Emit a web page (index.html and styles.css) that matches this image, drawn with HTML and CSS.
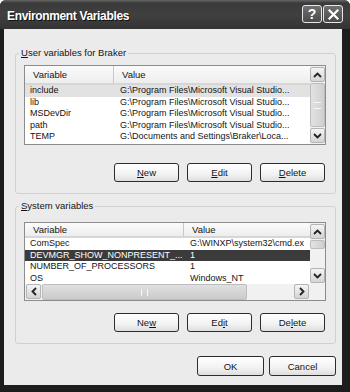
FILE: index.html
```html
<!DOCTYPE html>
<html lang="en">
<head>
    <meta charset="UTF-8">
    <title>Environment Variables</title>
    <link rel="stylesheet" href="styles.css">
</head>
<body>
    <div class="window">
        <div class="titlebar">
            <span class="title">Environment Variables</span>
            <div class="title-buttons">
                <span class="tbtn help">?</span>
                <span class="tbtn close">
                    <svg width="11" height="11" viewBox="0 0 11 11"><path d="M1.5 1.5 L9.5 9.5 M9.5 1.5 L1.5 9.5" stroke="#fff" stroke-width="2.2" stroke-linecap="square"/></svg>
                </span>
            </div>
        </div>

        <div class="content">
            <div class="group user-group">
                <div class="group-title"><u>U</u>ser variables for Braker</div>
                <div class="list user-list">
                    <div class="list-main">
                        <div class="list-head user-head">
                            <div class="cell var-col-user">Variable</div>
                            <div class="cell">Value</div>
                        </div>
                        <div class="row soft">
                            <div class="cell var-col-user">include</div>
                            <div class="cell">G:\Program Files\Microsoft Visual Studio...</div>
                        </div>
                        <div class="row">
                            <div class="cell var-col-user">lib</div>
                            <div class="cell">G:\Program Files\Microsoft Visual Studio...</div>
                        </div>
                        <div class="row">
                            <div class="cell var-col-user">MSDevDir</div>
                            <div class="cell">G:\Program Files\Microsoft Visual Studio...</div>
                        </div>
                        <div class="row">
                            <div class="cell var-col-user">path</div>
                            <div class="cell">G:\Program Files\Microsoft Visual Studio...</div>
                        </div>
                        <div class="row">
                            <div class="cell var-col-user">TEMP</div>
                            <div class="cell">G:\Documents and Settings\Braker\Loca...</div>
                        </div>
                    </div>
                    <div class="vscroll">
                        <span class="sbtn"><svg width="9" height="6" viewBox="0 0 9 6"><path d="M1 5 L4.5 1.5 L8 5" fill="none" stroke="#222" stroke-width="1.8"/></svg></span>
                        <span class="thumb full"><span class="grip-h"></span></span>
                        <span class="sbtn"><svg width="9" height="6" viewBox="0 0 9 6"><path d="M1 1 L4.5 4.5 L8 1" fill="none" stroke="#222" stroke-width="1.8"/></svg></span>
                    </div>
                </div>
                <div class="buttons">
                    <button class="btn"><u>N</u>ew</button>
                    <button class="btn"><u>E</u>dit</button>
                    <button class="btn"><u>D</u>elete</button>
                </div>
            </div>

            <div class="group sys-group">
                <div class="group-title"><u>S</u>ystem variables</div>
                <div class="list sys-list">
                    <div class="list-main">
                        <div class="list-head sys-head">
                            <div class="cell var-col-sys">Variable</div>
                            <div class="cell">Value</div>
                        </div>
                        <div class="row">
                            <div class="cell var-col-sys">ComSpec</div>
                            <div class="cell">G:\WINXP\system32\cmd.ex</div>
                        </div>
                        <div class="row dark">
                            <div class="cell var-col-sys">DEVMGR_SHOW_NONPRESENT_...</div>
                            <div class="cell">1</div>
                        </div>
                        <div class="row">
                            <div class="cell var-col-sys">NUMBER_OF_PROCESSORS</div>
                            <div class="cell">1</div>
                        </div>
                        <div class="row">
                            <div class="cell var-col-sys">OS</div>
                            <div class="cell">Windows_NT</div>
                        </div>
                    </div>
                    <div class="vscroll">
                        <span class="sbtn"><svg width="9" height="6" viewBox="0 0 9 6"><path d="M1 5 L4.5 1.5 L8 5" fill="none" stroke="#222" stroke-width="1.8"/></svg></span>
                        <span class="thumb small"></span>
                        <span class="track"></span>
                        <span class="sbtn"><svg width="9" height="6" viewBox="0 0 9 6"><path d="M1 1 L4.5 4.5 L8 1" fill="none" stroke="#222" stroke-width="1.8"/></svg></span>
                    </div>
                    <div class="hscroll">
                        <span class="sbtn"><svg width="6" height="9" viewBox="0 0 6 9"><path d="M5 1 L1.5 4.5 L5 8" fill="none" stroke="#222" stroke-width="1.8"/></svg></span>
                        <span class="thumb wide"><span class="grip-v"></span></span>
                        <span class="track"></span>
                        <span class="sbtn"><svg width="6" height="9" viewBox="0 0 6 9"><path d="M1 1 L4.5 4.5 L1 8" fill="none" stroke="#222" stroke-width="1.8"/></svg></span>
                    </div>
                    <div class="corner"></div>
                </div>
                <div class="buttons">
                    <button class="btn">Ne<u>w</u></button>
                    <button class="btn">Ed<u>i</u>t</button>
                    <button class="btn">De<u>l</u>ete</button>
                </div>
            </div>

            <div class="dialog-buttons">
                <button class="btn big">OK</button>
                <button class="btn big">Cancel</button>
            </div>
        </div>
    </div>
</body>
</html>
```

FILE: styles.css
```css
:root {
    --frame: #1d1d1d;
    --face: #ebebeb;
    --group-line: #d0d0d0;
    --list-line: #8c8c8c;
    --text: #141414;
}

body {
    margin: 0;
    background: #fff;
    font-family: "Liberation Sans", Arial, sans-serif;
    font-size: 9.5px;
    color: var(--text);
}

.window {
    width: 350px;
    height: 392px;
    background: var(--frame);
    border-radius: 6px 6px 0 0;
    display: flex;
    flex-direction: column;
    box-sizing: border-box;
}

/* title bar */
.titlebar {
    height: 29px;
    flex: none;
    display: flex;
    align-items: center;
    justify-content: space-between;
    padding: 2px 7px 0 7px;
    box-sizing: border-box;
    background: linear-gradient(#666 0, #3a3a3a 3px, #404040 50%, #343434 100%);
    border-radius: 6px 6px 0 0;
}

.title {
    color: #fff;
    font-weight: bold;
    font-size: 12px;
    letter-spacing: -0.35px;
    text-shadow: 1px 1px 0 #111;
}

.title-buttons {
    display: flex;
    gap: 1px;
    margin-top: -3px;
}

.tbtn {
    width: 18px;
    height: 16px;
    border: 1px solid #e8e8e8;
    border-radius: 3px;
    background: linear-gradient(#707070, #4a4a4a);
    color: #fff;
    display: flex;
    align-items: center;
    justify-content: center;
    font-weight: bold;
    font-size: 14px;
}

/* dialog body */
.content {
    flex: 1;
    margin: 0 8px 7px 4px;
    background: var(--face);
    padding: 24px 6px 0 11px;
    display: flex;
    flex-direction: column;
}

.group {
    border: 1px solid var(--group-line);
    border-radius: 3px;
    padding: 0 9px 11px 8px;
}

.sys-group {
    margin-top: 12px;
}

.group-title {
    width: fit-content;
    margin: -7px 0 0 -5px;
    padding: 0 2px;
    line-height: 12px;
    background: var(--face);
}

/* list views */
.list {
    display: grid;
    grid-template-columns: 1fr 15px;
    border: 1px solid var(--list-line);
    background: #fff;
    font-size: 9px;
}

.user-list {
    margin-top: 6px;
    height: 78px;
}

.sys-list {
    margin-top: 10px;
    grid-template-rows: 61px 16px;
    height: 77px;
}

.list-main {
    overflow: hidden;
    min-width: 0;
}

.list-head {
    display: flex;
    align-items: center;
    background: linear-gradient(#fbfbfb, #ededed);
    border-bottom: 2px solid #d6d6d6;
    box-sizing: border-box;
    font-size: 9.5px;
}

.user-head {
    height: 19px;
}

.sys-head {
    height: 15px;
}

.list-head .cell {
    padding-left: 8px;
}

.list-head .cell:first-child {
    border-right: 1px solid #c8c8c8;
    height: 100%;
    display: flex;
    align-items: center;
    box-sizing: border-box;
}

.row {
    display: flex;
    height: 11.5px;
    line-height: 11.5px;
}

.row.soft {
    background: #e2e2e2;
}

.row.dark {
    background: #3b3b3b;
    color: #fff;
}

.cell {
    white-space: nowrap;
    overflow: hidden;
    padding-left: 5px;
    box-sizing: border-box;
}

.var-col-user {
    width: 89px;
    flex: none;
}

.var-col-sys {
    width: 159px;
    flex: none;
}

.row .var-col-user + .cell,
.row .var-col-sys + .cell {
    padding-left: 6px;
}

/* scroll bars */
.vscroll {
    display: flex;
    flex-direction: column;
    gap: 1px;
    background: #f1f1f1;
    padding: 1px 0;
}

.hscroll {
    display: flex;
    gap: 1px;
    background: #f1f1f1;
    padding: 0 1px;
}

.sbtn {
    flex: none;
    width: 15px;
    height: 15px;
    box-sizing: border-box;
    border: 1px solid #b4b4b4;
    border-radius: 2px;
    background: linear-gradient(#f4f4f4, #d4d4d4);
    display: flex;
    align-items: center;
    justify-content: center;
}

.thumb {
    box-sizing: border-box;
    border: 1px solid #bdbdbd;
    border-radius: 2px;
    background: linear-gradient(90deg, #e2e2e2, #cfcfcf);
    display: flex;
    align-items: center;
    justify-content: center;
}

.thumb.full {
    flex: 1;
}

.thumb.small {
    height: 9px;
}

.thumb.wide {
    width: 205px;
    background: linear-gradient(#e0e0e0, #cbcbcb);
}

.track {
    flex: 1;
}

.grip-h {
    width: 7px;
    height: 5px;
    border-top: 1px solid #f8f8f8;
    border-bottom: 1px solid #f8f8f8;
}

.grip-v {
    width: 5px;
    height: 7px;
    border-left: 1px solid #f8f8f8;
    border-right: 1px solid #f8f8f8;
}

.corner {
    background: #f1f1f1;
}

/* buttons */
.buttons {
    display: flex;
    justify-content: flex-end;
    gap: 8px;
    margin-top: 12px;
    padding-right: 1px;
}

.user-group .buttons {
    margin-top: 18px;
}

.btn {
    width: 65px;
    height: 19px;
    padding: 0;
    border: 1px solid #2c2c2c;
    border-radius: 3px;
    background: linear-gradient(#ffffff, #f2f2f2 60%, #dedede);
    font-family: "Liberation Sans", Arial, sans-serif;
    font-size: 9.5px;
    color: var(--text);
}

.dialog-buttons {
    display: flex;
    justify-content: flex-end;
    gap: 5px;
    margin-top: 12px;
}

.btn.big {
    width: 67px;
    height: 20px;
}
```
